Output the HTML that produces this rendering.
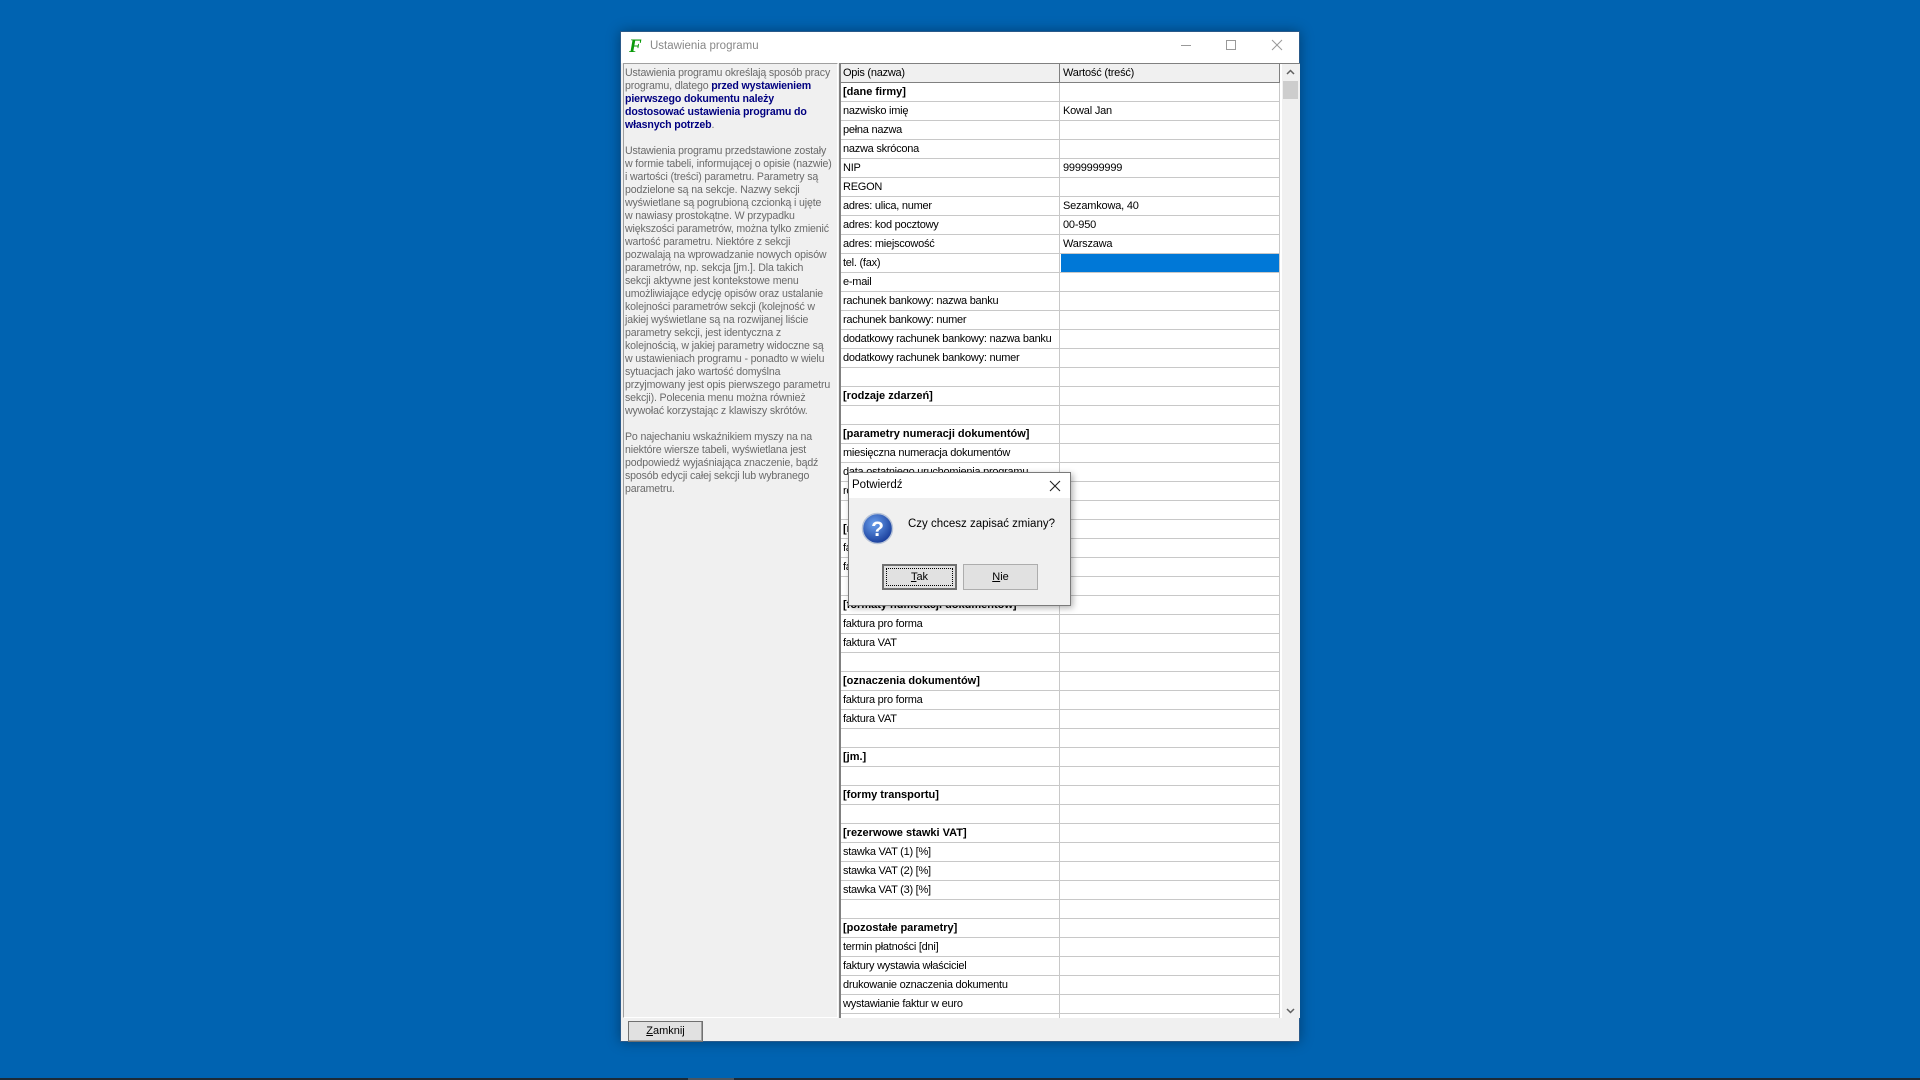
<!DOCTYPE html>
<html><head><meta charset="utf-8">
<style>
*{box-sizing:border-box;margin:0;padding:0}
body{width:1920px;height:1080px;background:#0063b1;position:relative;overflow:hidden;font-family:"Liberation Sans",sans-serif;font-size:11px}
.abs{position:absolute}
#win{left:620px;top:31px;width:680px;height:1011px;background:#f0f0f0;border:1px solid #2a5a8a;box-shadow:0 0 12px rgba(0,0,0,.35)}
#title{left:0;top:0;width:678px;height:31px;background:#fff}
#left{left:2px;top:31px;width:215px;height:955px;border:1px solid #a0a0a0;border-right-color:#fff;border-bottom-color:#fff;background:#f0f0f0;color:#6a6a6a;padding:3px 0 0 1px;line-height:13px;white-space:nowrap;font-size:10.6px;letter-spacing:-0.15px}
#left b{color:#000080}
#grid{left:218px;top:31px;width:461px;height:955px;background:#fff;border-left:2px solid #808080;border-top:1px solid #808080;overflow:hidden}
.r{position:absolute;left:0;width:439px;height:19px;border-bottom:1px solid #c8c8c8;white-space:nowrap;line-height:18px}
.c1{position:absolute;left:0;width:219px;height:18px;padding-left:2px;border-right:1px solid #c8c8c8;overflow:hidden;letter-spacing:-0.25px}
.c2{position:absolute;left:220px;width:219px;height:18px;padding-left:2px;border-right:1px solid #c8c8c8;letter-spacing:-0.2px}
.b{font-weight:bold;letter-spacing:0}
.hd{background:#f0f0f0;border-bottom:1px solid #808080}
.hd .c1,.hd .c2{border-right:1px solid #808080}
#sb{left:441px;top:0;width:18px;height:955px;background:#f0f0f0}
.btn{position:absolute;background:#e1e1e1;border:1px solid #adadad;text-align:center;font-size:11px}
</style></head><body>
<div id="win" class="abs">
 <div id="title" class="abs">
  <span class="abs" style="left:8px;top:4px;font-family:'Liberation Serif',serif;font-weight:bold;font-style:italic;color:#0a9a0a;font-size:19px">F</span>
  <span class="abs" style="left:29px;top:8px;color:#888;font-size:11.5px">Ustawienia programu</span>
  <svg class="abs" style="left:0;top:0" width="678" height="31"><g stroke="#999" stroke-width="1" fill="none"><line x1="560" y1="13.5" x2="570" y2="13.5"/><rect x="605.5" y="8.5" width="9" height="9"/><line x1="651" y1="8" x2="661" y2="18"/><line x1="661" y1="8" x2="651" y2="18"/></g></svg>
 </div>
 <div id="left" class="abs">Ustawienia programu określają sposób pracy<br>programu, dlatego <b>przed wystawieniem<br>pierwszego dokumentu należy<br>dostosować ustawienia programu do<br>własnych potrzeb</b>.<br><br>Ustawienia programu przedstawione zostały<br>w formie tabeli, informującej o opisie (nazwie)<br>i wartości (treści) parametru. Parametry są<br>podzielone są na sekcje. Nazwy sekcji<br>wyświetlane są pogrubioną czcionką i ujęte<br>w nawiasy prostokątne. W przypadku<br>większości parametrów, można tylko zmienić<br>wartość parametru. Niektóre z sekcji<br>pozwalają na wprowadzanie nowych opisów<br>parametrów, np. sekcja [jm.]. Dla takich<br>sekcji aktywne jest kontekstowe menu<br>umożliwiające edycję opisów oraz ustalanie<br>kolejności parametrów sekcji (kolejność w<br>jakiej wyświetlane są na rozwijanej liście<br>parametry sekcji, jest identyczna z<br>kolejnością, w jakiej parametry widoczne są<br>w ustawieniach programu - ponadto w wielu<br>sytuacjach jako wartość domyślna<br>przyjmowany jest opis pierwszego parametru<br>sekcji). Polecenia menu można również<br>wywołać korzystając z klawiszy skrótów.<br><br>Po najechaniu wskaźnikiem myszy na na<br>niektóre wiersze tabeli, wyświetlana jest<br>podpowiedź wyjaśniająca znaczenie, bądź<br>sposób edycji całej sekcji lub wybranego<br>parametru.</div>
 <div id="grid" class="abs">
  <div class="r hd" style="top:0"><div class="c1">Opis (nazwa)</div><div class="c2">Wartość (treść)</div></div>
  <div class="r" style="top:19px"><div class="c1 b">[dane firmy]</div><div class="c2"></div></div>
  <div class="r" style="top:38px"><div class="c1">nazwisko imię</div><div class="c2">Kowal Jan</div></div>
  <div class="r" style="top:57px"><div class="c1">pełna nazwa</div><div class="c2"></div></div>
  <div class="r" style="top:76px"><div class="c1">nazwa skrócona</div><div class="c2"></div></div>
  <div class="r" style="top:95px"><div class="c1">NIP</div><div class="c2">9999999999</div></div>
  <div class="r" style="top:114px"><div class="c1">REGON</div><div class="c2"></div></div>
  <div class="r" style="top:133px"><div class="c1">adres: ulica, numer</div><div class="c2">Sezamkowa, 40</div></div>
  <div class="r" style="top:152px"><div class="c1">adres: kod pocztowy</div><div class="c2">00-950</div></div>
  <div class="r" style="top:171px"><div class="c1">adres: miejscowość</div><div class="c2">Warszawa</div></div>
  <div class="r" style="top:190px"><div class="c1">tel. (fax)</div><div class="c2" style="background:#0078d7"></div></div>
  <div class="r" style="top:209px"><div class="c1">e-mail</div><div class="c2"></div></div>
  <div class="r" style="top:228px"><div class="c1">rachunek bankowy: nazwa banku</div><div class="c2"></div></div>
  <div class="r" style="top:247px"><div class="c1">rachunek bankowy: numer</div><div class="c2"></div></div>
  <div class="r" style="top:266px"><div class="c1">dodatkowy rachunek bankowy: nazwa banku</div><div class="c2"></div></div>
  <div class="r" style="top:285px"><div class="c1">dodatkowy rachunek bankowy: numer</div><div class="c2"></div></div>
  <div class="r" style="top:304px"><div class="c1"></div><div class="c2"></div></div>
  <div class="r" style="top:323px"><div class="c1 b">[rodzaje zdarzeń]</div><div class="c2"></div></div>
  <div class="r" style="top:342px"><div class="c1"></div><div class="c2"></div></div>
  <div class="r" style="top:361px"><div class="c1 b">[parametry numeracji dokumentów]</div><div class="c2"></div></div>
  <div class="r" style="top:380px"><div class="c1">miesięczna numeracja dokumentów</div><div class="c2"></div></div>
  <div class="r" style="top:399px"><div class="c1">data ostatniego uruchomienia programu</div><div class="c2"></div></div>
  <div class="r" style="top:418px"><div class="c1">rok obrachunkowy</div><div class="c2"></div></div>
  <div class="r" style="top:437px"><div class="c1"></div><div class="c2"></div></div>
  <div class="r" style="top:456px"><div class="c1 b">[numeracja faktur]</div><div class="c2"></div></div>
  <div class="r" style="top:475px"><div class="c1">faktura pro forma</div><div class="c2"></div></div>
  <div class="r" style="top:494px"><div class="c1">faktura VAT</div><div class="c2"></div></div>
  <div class="r" style="top:513px"><div class="c1"></div><div class="c2"></div></div>
  <div class="r" style="top:532px"><div class="c1 b">[formaty numeracji dokumentów]</div><div class="c2"></div></div>
  <div class="r" style="top:551px"><div class="c1">faktura pro forma</div><div class="c2"></div></div>
  <div class="r" style="top:570px"><div class="c1">faktura VAT</div><div class="c2"></div></div>
  <div class="r" style="top:589px"><div class="c1"></div><div class="c2"></div></div>
  <div class="r" style="top:608px"><div class="c1 b">[oznaczenia dokumentów]</div><div class="c2"></div></div>
  <div class="r" style="top:627px"><div class="c1">faktura pro forma</div><div class="c2"></div></div>
  <div class="r" style="top:646px"><div class="c1">faktura VAT</div><div class="c2"></div></div>
  <div class="r" style="top:665px"><div class="c1"></div><div class="c2"></div></div>
  <div class="r" style="top:684px"><div class="c1 b">[jm.]</div><div class="c2"></div></div>
  <div class="r" style="top:703px"><div class="c1"></div><div class="c2"></div></div>
  <div class="r" style="top:722px"><div class="c1 b">[formy transportu]</div><div class="c2"></div></div>
  <div class="r" style="top:741px"><div class="c1"></div><div class="c2"></div></div>
  <div class="r" style="top:760px"><div class="c1 b">[rezerwowe stawki VAT]</div><div class="c2"></div></div>
  <div class="r" style="top:779px"><div class="c1">stawka VAT (1) [%]</div><div class="c2"></div></div>
  <div class="r" style="top:798px"><div class="c1">stawka VAT (2) [%]</div><div class="c2"></div></div>
  <div class="r" style="top:817px"><div class="c1">stawka VAT (3) [%]</div><div class="c2"></div></div>
  <div class="r" style="top:836px"><div class="c1"></div><div class="c2"></div></div>
  <div class="r" style="top:855px"><div class="c1 b">[pozostałe parametry]</div><div class="c2"></div></div>
  <div class="r" style="top:874px"><div class="c1">termin płatności [dni]</div><div class="c2"></div></div>
  <div class="r" style="top:893px"><div class="c1">faktury wystawia właściciel</div><div class="c2"></div></div>
  <div class="r" style="top:912px"><div class="c1">drukowanie oznaczenia dokumentu</div><div class="c2"></div></div>
  <div class="r" style="top:931px"><div class="c1">wystawianie faktur w euro</div><div class="c2"></div></div>
  <div class="r" style="top:950px"><div class="c1"></div><div class="c2"></div></div>
  <div id="sb" class="abs">
   <svg class="abs" style="left:0;top:0" width="17" height="17"><polyline points="5,10 8.5,6.5 12,10" fill="none" stroke="#606060" stroke-width="1.5"/></svg>
   <div class="abs" style="left:1px;top:17px;width:15px;height:18px;background:#cdcdcd"></div>
   <svg class="abs" style="left:0;top:938px" width="17" height="17"><polyline points="5,7 8.5,10.5 12,7" fill="none" stroke="#606060" stroke-width="1.5"/></svg>
  </div>
 </div>
 <div class="btn" style="left:7px;top:989px;width:75px;height:21px;line-height:19px;border:1px solid #707070;box-shadow:inset -1px -1px #a0a0a0"><u>Z</u>amknij</div>
</div>
<div class="abs" style="left:0;top:1078px;width:1920px;height:2px;background:#1c2a36"></div>
<div class="abs" style="left:688px;top:1078px;width:46px;height:2px;background:#4a5560"></div>

<div class="abs" style="left:848px;top:472px;width:223px;height:134px;background:#f0f0f0;border:1px solid #7a7a7a;box-shadow:2px 2px 6px rgba(0,0,0,.3)">
 <div class="abs" style="left:0;top:0;width:221px;height:25px;background:#fff"></div>
 <span class="abs" style="left:3px;top:6px;font-size:11.5px">Potwierdź</span>
 <svg class="abs" style="left:200px;top:7px" width="12" height="12"><path d="M1 1L11 11M11 1L1 11" stroke="#222" stroke-width="1.1"/></svg>
 <svg class="abs" style="left:12px;top:39px" width="33" height="33"><defs><radialGradient id="g" cx="40%" cy="35%" r="65%"><stop offset="0" stop-color="#6aa0ee"/><stop offset="1" stop-color="#1a3f9c"/></radialGradient></defs><circle cx="16.5" cy="16.5" r="15" fill="url(#g)" stroke="#b8c4d8" stroke-width="1.5"/><text x="16.5" y="24" text-anchor="middle" font-family="Liberation Sans" font-weight="bold" font-size="21" fill="#fff">?</text></svg>
 <span class="abs" style="left:59px;top:45px;font-size:11.5px">Czy chcesz zapisać zmiany?</span>
 <div class="btn" style="left:33px;top:91px;width:75px;height:26px;line-height:22px;border:2px solid #707070;outline:1px dotted #000;outline-offset:-5px"><u>T</u>ak</div>
 <div class="btn" style="left:114px;top:91px;width:75px;height:26px;line-height:24px"><u>N</u>ie</div>
</div>
</body></html>
